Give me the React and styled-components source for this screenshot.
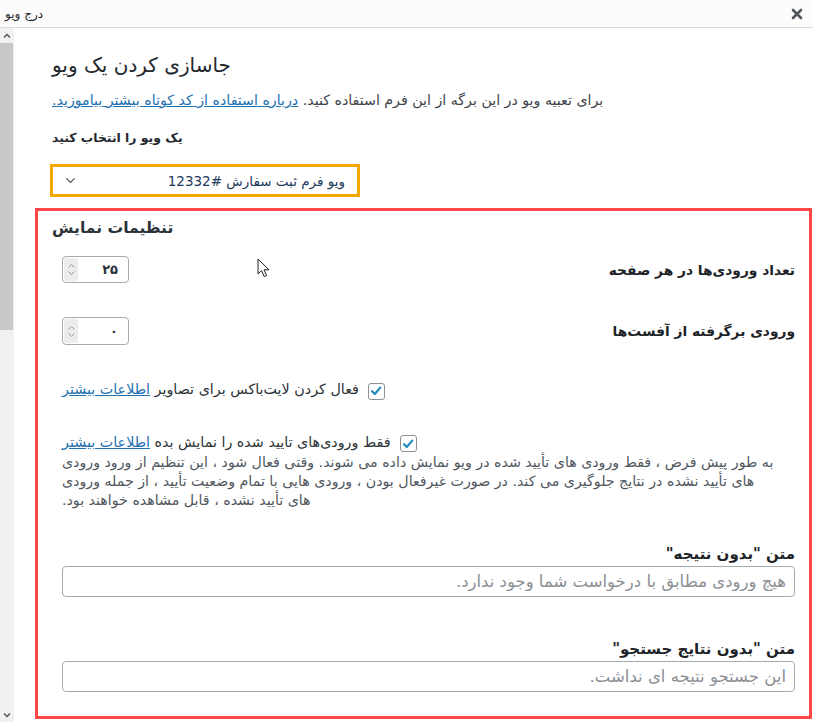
import styled, { createGlobalStyle } from "styled-components"
import { ChevronDown } from "lucide-react"

const GlobalStyle = createGlobalStyle`
  html, body {
    margin: 0;
    padding: 0;
    background: #fff;
  }
  body {
    font-family: "DejaVu Sans", "Noto Sans", sans-serif;
    color: #23282d;
  }
  * {
    box-sizing: border-box;
  }
`

const CloseIcon = () => (
  <svg width="12" height="12" viewBox="0 0 12 12">
    <path d="M2 2 L10 10 M10 2 L2 10" stroke="#50575e" strokeWidth="2.6" strokeLinecap="round" />
  </svg>
)

const CheckMark = () => (
  <svg width="14" height="14" viewBox="0 0 14 14">
    <path d="M3 7.2 L5.8 10 L11.2 3.6" fill="none" stroke="#1e8cbe" strokeWidth="2.2" strokeLinecap="round" strokeLinejoin="round" />
  </svg>
)

const SpinArrows = () => (
  <svg width="9" height="15" viewBox="0 0 9 15">
    <path d="M1.5 5.5 L4.5 2.5 L7.5 5.5 M1.5 9.5 L4.5 12.5 L7.5 9.5" fill="none" stroke="#9a9a9a" strokeWidth="1" />
  </svg>
)

const Caret = ({ down }) => (
  <svg width="8" height="6" viewBox="0 0 8 6">
    <path d={down ? "M1 1.5 L4 4.5 L7 1.5" : "M1 4.5 L4 1.5 L7 4.5"} fill="none" stroke="#505050" strokeWidth="1.3" />
  </svg>
)

const App = () => {
  return (
    <>
      <GlobalStyle />
      <Modal>
        <TitleBar>
          <DialogTitle>درج ویو</DialogTitle>
          <CloseButton><CloseIcon /></CloseButton>
        </TitleBar>

        <Body>
          <ScrollTrack>
            <ScrollArrow><Caret /></ScrollArrow>
            <ScrollThumb />
            <ScrollSpacer />
            <ScrollArrow><Caret down /></ScrollArrow>
          </ScrollTrack>

          <Content>
            <Intro>
              <PageHeading>جاسازی کردن یک ویو</PageHeading>
              <Lead>
                برای تعبیه ویو در این برگه از این فرم استفاده کنید. <Link href="#">درباره استفاده از کد کوتاه بیشتر بیاموزید.</Link>
              </Lead>
              <FieldLabel>یک ویو را انتخاب کنید</FieldLabel>
              <SelectFrame>
                <SelectValue>ویو فرم ثبت سفارش #12332</SelectValue>
                <ChevronDown size={15} color="#50575e" strokeWidth={2} />
              </SelectFrame>
            </Intro>

            <SettingsBox>
              <SectionTitle>تنظیمات نمایش</SectionTitle>

              <NumberRow $gap={16}>
                <RowLabel>تعداد ورودی‌ها در هر صفحه</RowLabel>
                <NumberBox>
                  <NumberValue>۲۵</NumberValue>
                  <Spinner><SpinArrows /></Spinner>
                </NumberBox>
              </NumberRow>

              <NumberRow $gap={34}>
                <RowLabel>ورودی برگرفته از آفست‌ها</RowLabel>
                <NumberBox $tall>
                  <NumberValue>۰</NumberValue>
                  <Spinner><SpinArrows /></Spinner>
                </NumberBox>
              </NumberRow>

              <CheckRow $gap={34}>
                <Checkbox><CheckMark /></Checkbox>
                فعال کردن لایت‌باکس برای تصاویر <Link href="#">اطلاعات بیشتر</Link>
              </CheckRow>

              <CheckRow $gap={32}>
                <Checkbox><CheckMark /></Checkbox>
                فقط ورودی‌های تایید شده را نمایش بده <Link href="#">اطلاعات بیشتر</Link>
              </CheckRow>
              <Description>
                به طور پیش فرض ، فقط ورودی های تأیید شده در ویو نمایش داده می شوند. وقتی فعال شود ، این تنظیم از ورود ورودی های تأیید نشده در نتایج جلوگیری می کند. در صورت غیرفعال بودن ، ورودی هایی با تمام وضعیت تأیید ، از جمله ورودی های تأیید نشده ، قابل مشاهده خواهند بود.
              </Description>

              <TextLabel $gap={34}>متن "بدون نتیجه"</TextLabel>
              <TextInput placeholder="هیچ ورودی مطابق با درخواست شما وجود ندارد." />

              <TextLabel $gap={42}>متن "بدون نتایج جستجو"</TextLabel>
              <TextInput placeholder="این جستجو نتیجه ای نداشت." />
            </SettingsBox>
          </Content>
        </Body>

        <Pointer width="13" height="20" viewBox="0 0 13 20">
          <path d="M1 1 L1 16 L4.6 12.6 L7.2 18.6 L9.6 17.6 L7 11.8 L12 11.8 Z" fill="#fff" stroke="#222" strokeWidth="1" strokeLinejoin="round" />
        </Pointer>
      </Modal>
    </>
  )
}


/////////////////////
//    FRAME

const Modal = styled.div`
  position: relative;
  width: 813px;
  height: 727px;
  display: flex;
  flex-direction: column;
  overflow: hidden;
  background: #fff;
`

const TitleBar = styled.div`
  height: 28px;
  flex-shrink: 0;
  display: flex;
  align-items: center;
  justify-content: space-between;
  padding: 0 10px 0 5px;
  background: #fcfcfc;
  border-bottom: 1px solid #dcdcde;
`

const DialogTitle = styled.div`
  direction: rtl;
  font-size: 12px;
  color: #23282d;
`

const CloseButton = styled.div`
  display: flex;
  align-items: center;
`

const Body = styled.div`
  flex: 1;
  min-height: 0;
  display: flex;
`


/////////////////////
//    SCROLLBAR

const ScrollTrack = styled.div`
  width: 14px;
  flex-shrink: 0;
  display: flex;
  flex-direction: column;
  background: #f1f1f1;
  margin-bottom: 5px;
`

const ScrollArrow = styled.div`
  height: 15px;
  display: flex;
  align-items: center;
  justify-content: center;
`

const ScrollThumb = styled.div`
  height: 287px;
  margin: 0 1px 0 0;
  background: #c8c8c8;
`

const ScrollSpacer = styled.div`
  flex: 1;
`


/////////////////////
//    INTRO

const Content = styled.div`
  flex: 1;
  min-width: 0;
  direction: rtl;
  text-align: left;
  padding: 25px 1px 0 21px;
  overflow: hidden;
`

const Intro = styled.div`
  padding-left: 17px;
`

const PageHeading = styled.h2`
  margin: 0;
  font-size: 20px;
  line-height: 24px;
  font-weight: 400;
  color: #23282d;
`

const Lead = styled.p`
  margin: 14px 0 0;
  font-size: 14.2px;
  line-height: 18px;
  color: #3c434a;
`

const Link = styled.a`
  color: #2271b1;
  text-decoration: underline;
`

const FieldLabel = styled.div`
  margin-top: 20px;
  font-size: 12.4px;
  line-height: 18px;
  font-weight: 700;
`

const SelectFrame = styled.div`
  margin: 17px auto 0 -2px;
  width: 310px;
  height: 33px;
  display: flex;
  align-items: center;
  justify-content: space-between;
  padding: 0 12px 0 10px;
  border: 3px solid #f5a700;
  background: #fff;
`

const SelectValue = styled.span`
  font-size: 13.5px;
  color: #1d3a5c;
`


/////////////////////
//    SETTINGS

const SettingsBox = styled.div`
  margin-top: 11px;
  border: 3px solid #ff4646;
  padding: 5px 14px 24px;
`

const SectionTitle = styled.h3`
  margin: 0;
  font-size: 15.6px;
  line-height: 24px;
  font-weight: 700;
  color: #2c3338;
`

const NumberRow = styled.div`
  margin-top: ${p => p.$gap}px;
  padding-left: 10px;
  display: flex;
  align-items: center;
  justify-content: space-between;
`

const RowLabel = styled.div`
  font-size: 13.8px;
  font-weight: 700;
  color: #1d2327;
`

const NumberBox = styled.div`
  width: 67px;
  height: ${p => (p.$tall ? 28 : 27)}px;
  display: flex;
  align-items: center;
  padding: 1px;
  border: 1px solid #a7aaad;
  border-radius: 4px;
  background: #fff;
`

const NumberValue = styled.span`
  flex: 1;
  text-align: right;
  padding-right: 9px;
  font-size: 13px;
  font-weight: 700;
  color: #2c3338;
`

const Spinner = styled.span`
  width: 14px;
  align-self: stretch;
  display: flex;
  align-items: center;
  justify-content: center;
  background: #ececec;
  border-radius: 2px;
`

const CheckRow = styled.div`
  margin-top: ${p => p.$gap}px;
  padding-left: 10px;
  font-size: 14.3px;
  line-height: 20px;
  color: #2c3338;
`

const Checkbox = styled.span`
  display: inline-flex;
  align-items: center;
  justify-content: center;
  width: 17px;
  height: 17px;
  margin-left: 9px;
  vertical-align: -4px;
  border: 1px solid #8c8f94;
  border-radius: 3px;
  background: #fff;
`

const Description = styled.p`
  margin: 1px 0 0;
  padding: 0 20px 0 10px;
  font-size: 14.2px;
  line-height: 19px;
  color: #50575e;
`

const TextLabel = styled.div`
  margin-top: ${p => p.$gap}px;
  text-align: right;
  font-size: 15px;
  line-height: 20px;
  font-weight: 700;
  color: #1d2327;
`

const TextInput = styled.input`
  display: block;
  margin: 2px 0 0 10px;
  width: calc(100% - 10px);
  height: 31px;
  padding: 0 8px;
  direction: rtl;
  font-family: "DejaVu Sans", "Noto Sans", sans-serif;
  font-size: 16.5px;
  border: 1px solid #a7aaad;
  border-radius: 4px;
  background: #fff;
  outline: none;

  &::placeholder {
    color: #8c8f94;
  }
`

const Pointer = styled.svg`
  position: absolute;
  left: 257px;
  top: 258px;
`

export default App
